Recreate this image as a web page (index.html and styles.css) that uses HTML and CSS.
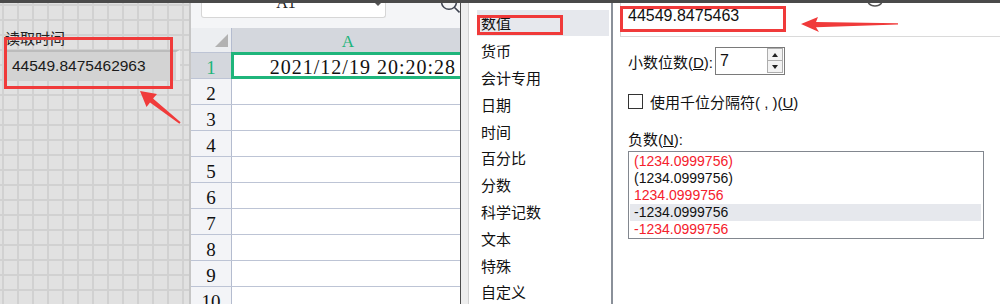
FILE: index.html
```html
<!DOCTYPE html>
<html lang="zh-CN">
<head>
    <meta charset="UTF-8" />
    <meta name="viewport" content="width=device-width, initial-scale=1" />
    <title>单元格格式 - 数值</title>
    <link rel="stylesheet" href="styles.css">
</head>
<body>
    <div class="topbar"></div>

    <div class="main">
        <!-- form designer canvas -->
        <div class="canvas">
            <div class="field-label">读取时间</div>
            <div class="field">44549.8475462963</div>
            <div class="mark mark-field"></div>
            <svg class="arrow arrow-field" width="46" height="42" viewBox="0 0 46 42">
                <polygon points="3,5 20,8 16,12.6 43.6,36.2 42.4,37.8 13,16.4 9.5,21" />
            </svg>
        </div>

        <!-- spreadsheet -->
        <div class="sheet">
            <div class="sheet-bar">
                <div class="namebox"><span>A1</span><i class="caret"></i></div>
                <svg class="search" width="20" height="12" viewBox="0 0 20 12">
                    <path d="M1.6 0 A7.5 7.5 0 0 0 16.4 0" />
                    <path d="M14.3 4.3 L19.5 9.5" />
                </svg>
            </div>
            <div class="grid">
                <div class="row head">
                    <div class="rh corner"><i class="tri"></i></div>
                    <div class="cell col">A</div>
                </div>
                <div class="row active">
                    <div class="rh">1</div>
                    <div class="cell selected">2021/12/19 20:20:28</div>
                </div>
                <div class="row"><div class="rh">2</div><div class="cell"></div></div>
                <div class="row"><div class="rh">3</div><div class="cell"></div></div>
                <div class="row"><div class="rh">4</div><div class="cell"></div></div>
                <div class="row"><div class="rh">5</div><div class="cell"></div></div>
                <div class="row"><div class="rh">6</div><div class="cell"></div></div>
                <div class="row"><div class="rh">7</div><div class="cell"></div></div>
                <div class="row"><div class="rh">8</div><div class="cell"></div></div>
                <div class="row"><div class="rh">9</div><div class="cell"></div></div>
                <div class="row"><div class="rh">10</div><div class="cell"></div></div>
            </div>
        </div>

        <div class="gutter"></div>

        <!-- format cells dialog -->
        <div class="dialog">
            <ul class="cats">
                <li class="current">数值<span class="mark mark-cat"></span></li>
                <li>货币</li>
                <li>会计专用</li>
                <li>日期</li>
                <li>时间</li>
                <li>百分比</li>
                <li>分数</li>
                <li>科学记数</li>
                <li>文本</li>
                <li>特殊</li>
                <li>自定义</li>
            </ul>

            <div class="pane">
                <svg class="help" width="24" height="4" viewBox="0 0 24 4">
                    <path d="M5.3 0 A9 9 0 0 0 18.7 0" />
                </svg>

                <div class="sample">
                    44549.8475463
                    <div class="mark mark-sample"></div>
                    <svg class="arrow arrow-sample" width="104" height="22" viewBox="0 0 104 22">
                        <polygon points="3,10 20,3 18,8 100,9.3 100,10.6 18,13.2 21,18" />
                    </svg>
                </div>

                <div class="spin-row">
                    <span class="spin-label">小数位数(<u>D</u>):</span>
                    <div class="spin">
                        <span class="spin-value">7</span>
                        <div class="spin-btns">
                            <div class="spin-btn"><i class="up"></i></div>
                            <div class="spin-btn"><i class="down"></i></div>
                        </div>
                    </div>
                </div>

                <div class="check-row">
                    <span class="checkbox"></span>
                    <span>使用千位分隔符( , )(<u>U</u>)</span>
                </div>

                <div class="neg-label">负数(<u>N</u>):</div>
                <ul class="neg-list">
                    <li class="red">(1234.0999756)</li>
                    <li>(1234.0999756)</li>
                    <li class="red">1234.0999756</li>
                    <li class="current">-1234.0999756</li>
                    <li class="red">-1234.0999756</li>
                </ul>
            </div>
        </div>
    </div>
</body>
</html>
```

FILE: styles.css
```css
html, body {
    margin: 0;
    padding: 0;
}

body {
    width: 1000px;
    height: 304px;
    overflow: hidden;
    background-color: #fff;
    font-family: "Liberation Sans", "Noto Sans CJK SC", sans-serif;
    color: #111;
}

ul {
    list-style: none;
    margin: 0;
    padding: 0;
}

.topbar {
    height: 3px;
    background-color: #4a4a4a;
}

.main {
    display: flex;
    height: 301px;
    overflow: hidden;
}

/* annotation marks */
.mark {
    position: absolute;
    box-sizing: border-box;
    border: 3px solid #f03a3a;
}

.arrow {
    position: absolute;
    fill: #f03a3a;
}

/* canvas */
.canvas {
    position: relative;
    width: 191px;
    flex-shrink: 0;
    padding-top: 25px;
    box-sizing: border-box;
    border-right: 2px solid #c6c6c6;
    background-color: #e1e1e1;
    background-image:
        linear-gradient(to right, #d1d1d1 2px, transparent 2px),
        linear-gradient(to bottom, #d1d1d1 2px, transparent 2px);
    background-size: 15px 15px;
    background-position: 2px 1px;
}

.field-label {
    margin-left: 5px;
    font-family: "Noto Sans CJK SC", sans-serif;
    font-size: 15px;
    line-height: 19px;
    color: #222;
}

.field {
    margin: 3px 0 0 7px;
    width: 173px;
    height: 30px;
    box-sizing: border-box;
    padding-left: 5px;
    background-color: #d3d3d3;
    border-top: 2px solid #bcbcbc;
    border-right: 4px solid #ececec;
    font-size: 15.5px;
    line-height: 28px;
    color: #1a1a1a;
}

.mark-field {
    left: 4px;
    top: 34px;
    width: 169px;
    height: 52px;
}

.arrow-field {
    left: 137px;
    top: 83px;
}

/* spreadsheet */
.sheet {
    width: 269px;
    flex-shrink: 0;
    overflow: hidden;
    background-color: #f4f5f7;
    border-right: 1px solid #4d4d4d;
    font-family: "Liberation Serif", serif;
}

.sheet-bar {
    display: flex;
    align-items: flex-start;
    height: 25px;
    padding-left: 10px;
}

.namebox {
    display: flex;
    align-items: flex-start;
    width: 185px;
    height: 15px;
    box-sizing: border-box;
    overflow: hidden;
    background-color: #fff;
    border: 1px solid #d6d6d6;
    border-top: none;
    border-radius: 0 0 3px 3px;
}

.namebox span {
    flex: 1;
    margin-top: -8px;
    padding-right: 5px;
    text-align: center;
    font-size: 16px;
    line-height: 16px;
    color: #222;
}

.caret {
    margin: 0 4px 0 0;
    border-top: 3px solid #555;
    border-left: 3px solid transparent;
    border-right: 3px solid transparent;
}

.search {
    margin-left: auto;
    fill: none;
    stroke: #3e4350;
    stroke-width: 1.6;
}

.grid {
    width: 273px;
}

.row {
    display: flex;
    height: 26px;
    box-sizing: border-box;
    border-bottom: 1px solid #bdc4d5;
    font-size: 19px;
}

.row.head {
    height: 25px;
    background-color: #d4d7dd;
}

.rh {
    width: 41px;
    flex-shrink: 0;
    box-sizing: border-box;
    border-right: 1px solid #b4bccf;
    background-color: #f3f4f7;
    text-align: center;
    padding-top: 4px;
    line-height: 21px;
    color: #111;
}

.rh.corner {
    display: flex;
    justify-content: flex-end;
    align-items: flex-end;
    padding: 0 3px 5px 0;
    background-color: #eceef1;
}

.tri {
    width: 13px;
    height: 13px;
    background-color: #b2b2b2;
    clip-path: polygon(100% 0, 100% 100%, 0 100%);
}

.cell {
    flex: 1;
    background-color: #fff;
    text-align: right;
    padding: 4px 8px 0 0;
    line-height: 21px;
    font-size: 20px;
    letter-spacing: 1px;
    white-space: nowrap;
}

.cell.col {
    background-color: #d4d7dd;
    text-align: center;
    padding: 3px 0 0 0;
    font-size: 17px;
    letter-spacing: 0;
    color: #1db47a;
}

.row.active .rh {
    background-color: #d4d7dd;
    color: #1db47a;
}

.cell.selected {
    position: relative;
    z-index: 1;
    outline: 3px solid #1fb57b;
    outline-offset: -2px;
    color: #111;
}

.gutter {
    width: 7px;
    flex-shrink: 0;
    background-color: #eeeeee;
    border-right: 1px solid #d2d2d2;
}

/* dialog */
.dialog {
    flex: 1;
    display: flex;
    font-size: 15px;
}

.cats {
    width: 144px;
    flex-shrink: 0;
    box-sizing: border-box;
    padding: 7px 2px 0 8px;
    border-right: 2px solid #8a9099;
    font-family: "Noto Sans CJK SC", sans-serif;
}

.cats li {
    position: relative;
    height: 26.8px;
    line-height: 26.8px;
    padding-left: 4px;
    color: #111;
}

.cats li.current {
    height: 26px;
    line-height: 26px;
    margin-bottom: 2.3px;
    background-color: #e6e8ed;
}

.mark-cat {
    left: 0;
    top: 5px;
    width: 86px;
    height: 20px;
}

.pane {
    position: relative;
    flex: 1;
    padding-left: 7px;
}

.help {
    position: absolute;
    left: 250px;
    top: 0;
    fill: none;
    stroke: #555;
    stroke-width: 1.5;
}

.sample {
    position: relative;
    height: 34px;
    box-sizing: border-box;
    padding-left: 7px;
    border-left: 1px solid #dadada;
    border-bottom: 1px solid #dadada;
    font-size: 16px;
    line-height: 26px;
}

.mark-sample {
    left: -1px;
    top: 3px;
    width: 166px;
    height: 26px;
}

.arrow-sample {
    left: 177px;
    top: 11px;
}

.spin-row {
    display: flex;
    align-items: center;
    height: 28px;
    margin: 10px 0 0 8px;
}

.spin-label {
    width: 87px;
}

.spin {
    display: flex;
    width: 70px;
    height: 28px;
    box-sizing: border-box;
    border: 1px solid #7a7a7a;
    padding: 0 1px 1px 0;
}

.spin-value {
    flex: 1;
    padding-left: 4px;
    font-size: 16px;
    line-height: 26px;
}

.spin-btns {
    display: flex;
    flex-direction: column;
    width: 16px;
}

.spin-btn {
    display: flex;
    flex: 1;
    align-items: center;
    justify-content: center;
    border: 1px solid #adadad;
    background-color: #f3f3f3;
}

.spin-btn + .spin-btn {
    border-top: none;
}

.up {
    border-bottom: 4px solid #222;
    border-left: 3px solid transparent;
    border-right: 3px solid transparent;
}

.down {
    border-top: 4px solid #222;
    border-left: 3px solid transparent;
    border-right: 3px solid transparent;
}

.check-row {
    display: flex;
    align-items: center;
    height: 20px;
    margin: 16px 0 0 8px;
}

.checkbox {
    width: 15px;
    height: 15px;
    box-sizing: border-box;
    margin-right: 7px;
    border: 1px solid #333;
    background-color: #fff;
}

.neg-label {
    height: 20px;
    line-height: 20px;
    margin: 18.5px 0 0 8px;
}

.neg-list {
    width: 356px;
    height: 88px;
    box-sizing: border-box;
    margin: 1.5px 0 0 8px;
    padding: 1px 2px 0 1px;
    border: 1px solid #82878f;
    font-size: 14px;
}

.neg-list li {
    height: 17px;
    line-height: 17px;
    padding-left: 4px;
    color: #111;
}

.neg-list li.red {
    color: #f5202c;
}

.neg-list li.current {
    background-color: #e6e8ed;
}
```
